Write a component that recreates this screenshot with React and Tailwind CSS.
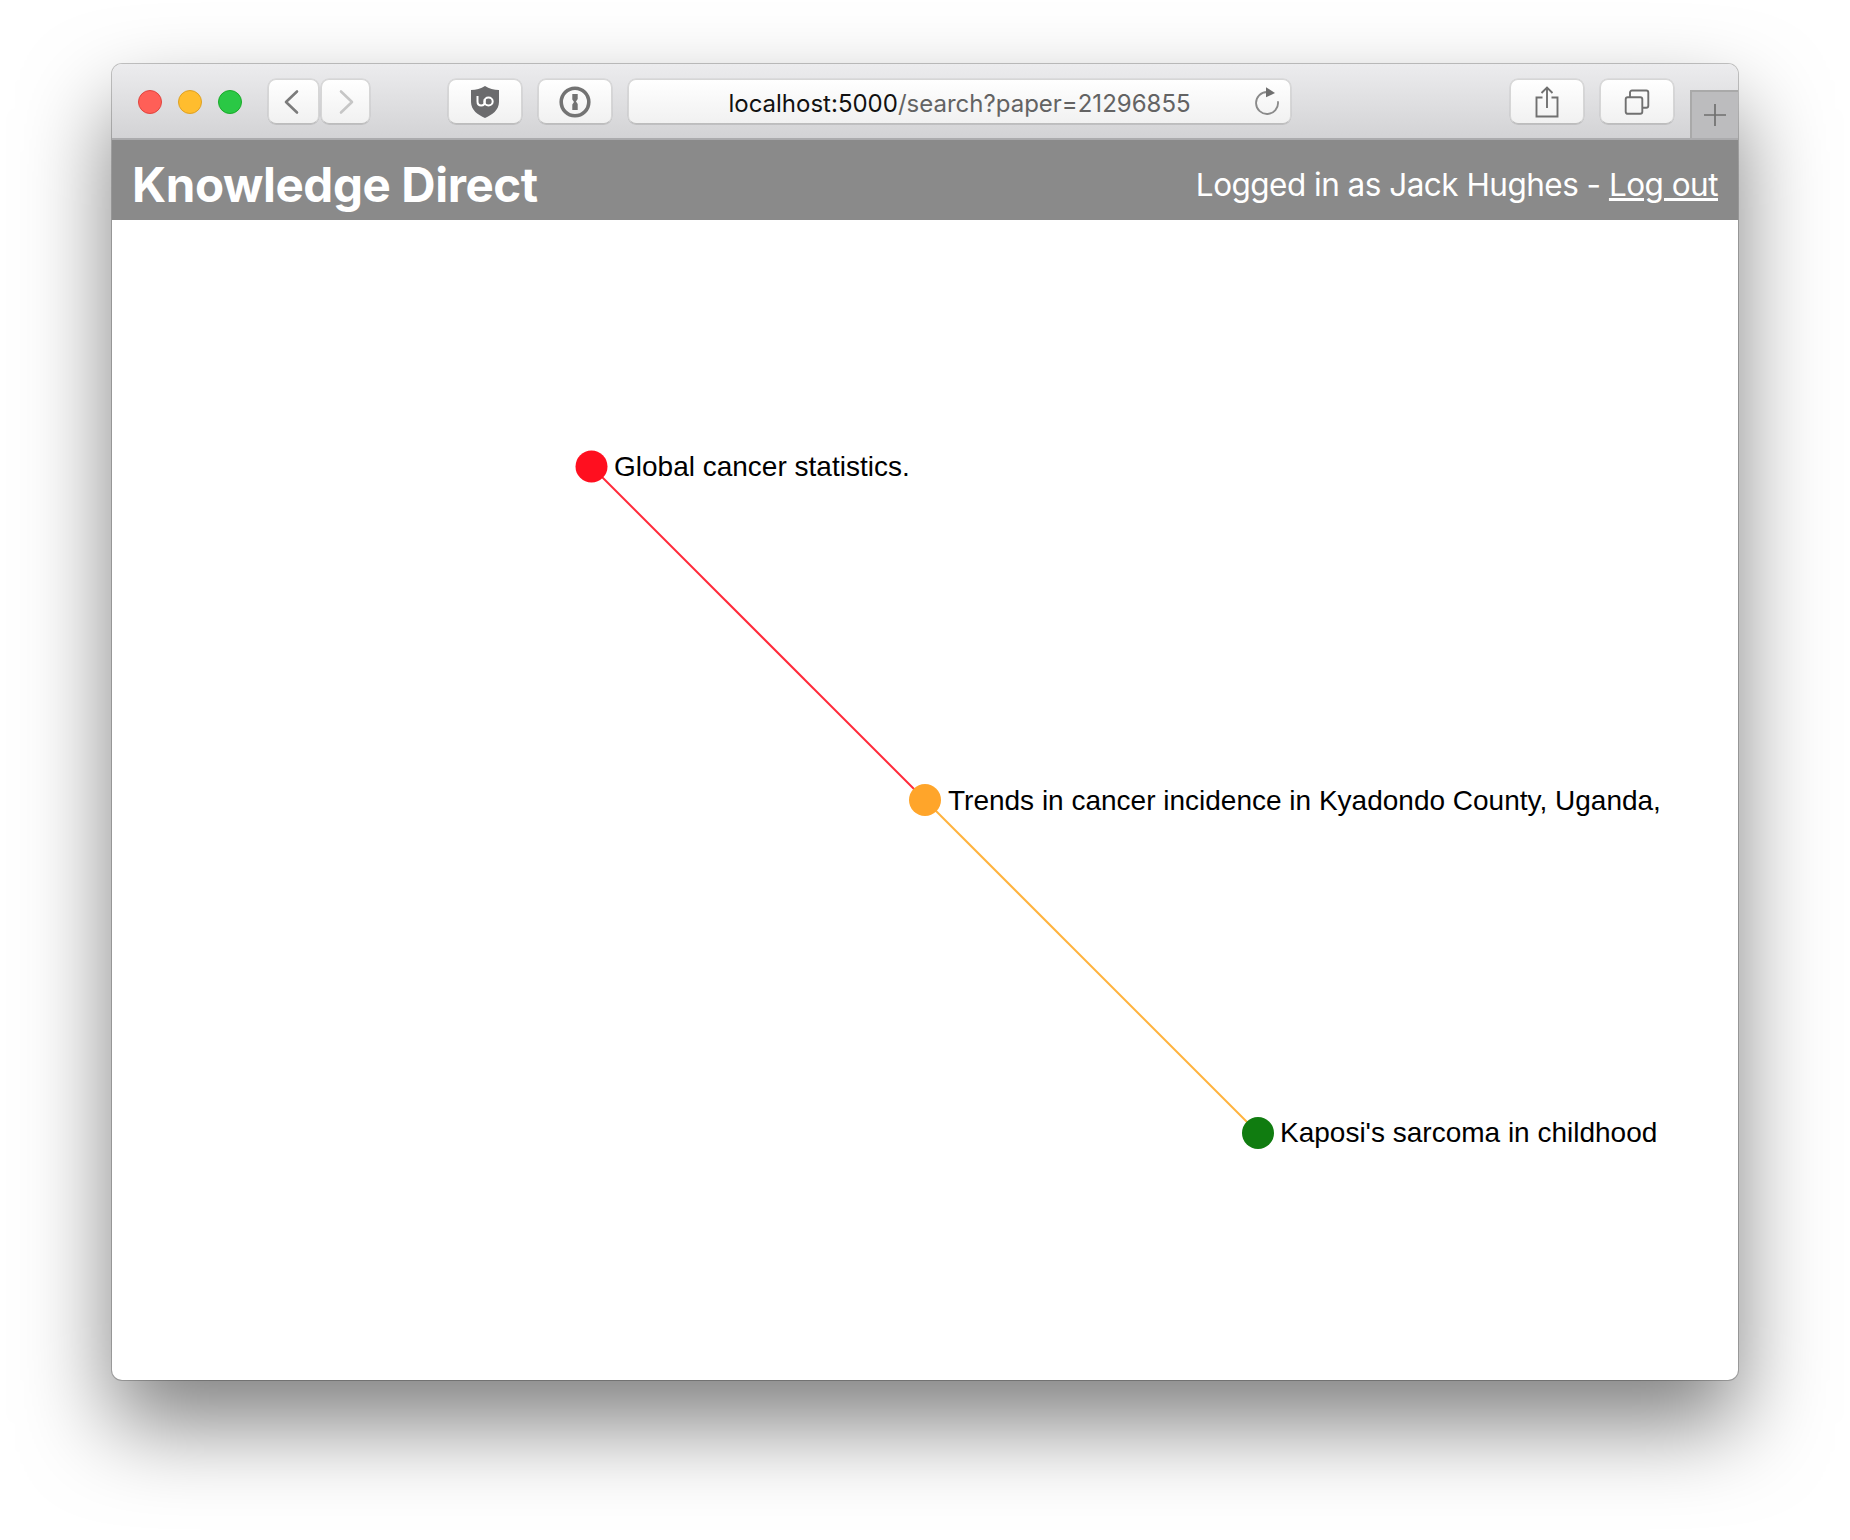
const Btn = ({ className, children }) => (
  <div className={"flex h-[45px] items-center justify-center rounded-[8px] border border-[#d6d6d6] border-b-[#bdbdbd] bg-gradient-to-b from-[#ffffff] to-[#f1f1f1] shadow-[0_0_0_0.5px_rgba(0,0,0,0.1),0_1px_0_rgba(0,0,0,0.06)] " + className}>
    {children}
  </div>
);

function Toolbar() {
  return (
    <div className="relative flex h-[76px] shrink-0 items-start border-b-2 border-[#ababad] bg-gradient-to-b from-[#ececee] to-[#d3d3d5] pt-[15px]">
      <div className="ml-[26px] mt-[11px] flex gap-[16px]">
        <span className="h-[24px] w-[24px] rounded-full border border-[#e0443e] bg-[#ff5f57]" />
        <span className="h-[24px] w-[24px] rounded-full border border-[#dea123] bg-[#ffbd2e]" />
        <span className="h-[24px] w-[24px] rounded-full border border-[#1aab29] bg-[#2ac845]" />
      </div>
      <div className="ml-[26px] flex gap-[2px]">
        <Btn className="w-[51px]">
          <svg className="mr-[5px]" width="16" height="26" viewBox="0 0 16 26" fill="none" stroke="#7b7b7b" strokeWidth="2.6" strokeLinecap="round" strokeLinejoin="round">
            <path d="M14 2.5 L3 13 L14 23.5" />
          </svg>
        </Btn>
        <Btn className="w-[49px]">
          <svg className="ml-[3px]" width="16" height="26" viewBox="0 0 16 26" fill="none" stroke="#c6c6c6" strokeWidth="2.6" strokeLinecap="round" strokeLinejoin="round">
            <path d="M2 2.5 L13 13 L2 23.5" />
          </svg>
        </Btn>
      </div>
      <Btn className="ml-[78px] w-[74px]">
        <svg width="30" height="34" viewBox="0 0 30 34">
          <path d="M15 1 C19 3.8 24 5 29 5 L29 17 C29 25 22 30 15 33 C8 30 1 25 1 17 L1 5 C6 5 11 3.8 15 1 Z" fill="#6b6b6d" />
          <path d="M7.5 11 L7.5 16.5 C7.5 19 9 20.5 11.2 20.5 C13.4 20.5 14.8 19 14.8 16.5 L14.8 14" fill="none" stroke="#fff" strokeWidth="2" />
          <ellipse cx="18.5" cy="16.5" rx="4.2" ry="4" fill="none" stroke="#fff" strokeWidth="2" />
        </svg>
      </Btn>
      <Btn className="ml-[16px] w-[74px]">
        <svg width="32" height="32" viewBox="0 0 32 32">
          <circle cx="16" cy="16" r="13.8" fill="none" stroke="#737373" strokeWidth="3.6" />
          <path d="M13.3 8 L18.7 8 L18.7 13 L17 15.5 L18.7 18 L18.7 24 L13.3 24 L13.3 18.5 L15 16 L13.3 13.5 Z" fill="#737373" />
        </svg>
      </Btn>
      <Btn className="ml-[16px] w-[663px] relative">
        <span className="translate-y-[2px] font-['Inter',sans-serif] text-[24px] leading-none text-[#636363]">
          <span className="text-[#111111]">localhost:5000</span>/search?paper=21296855
        </span>
        <svg className="absolute right-[10px] top-[6px]" width="26" height="32" viewBox="0 0 26 32" fill="none">
          <path d="M13 6 A11 11 0 1 0 24 16" stroke="#8a8a8a" strokeWidth="1.8" strokeLinecap="round" />
          <path d="M12 1.3 L21 7 L12 11.3 Z" fill="#6f6f6f" />
        </svg>
      </Btn>
      <Btn className="ml-[219px] w-[74px]">
        <svg width="24" height="34" viewBox="0 0 24 34" fill="none" stroke="#707070" strokeWidth="1.9">
          <path d="M7.5 12.5 H1.5 V31.5 H22.5 V12.5 H16.5" />
          <path d="M12 23 V2.5 M6.5 8 L12 2.5 L17.5 8" />
        </svg>
      </Btn>
      <Btn className="ml-[16px] w-[74px]">
        <svg width="26" height="26" viewBox="0 0 26 26" fill="none" stroke="#707070" strokeWidth="1.9">
          <rect x="1.7" y="8.2" width="16.6" height="16.6" rx="2" />
          <path d="M6 8.2 V3.5 A2 2 0 0 1 8 1.5 H22.3 A2 2 0 0 1 24.3 3.5 V16.8 A2 2 0 0 1 22.3 18.8 H18.3" />
        </svg>
      </Btn>
      <div className="absolute bottom-0 right-0 flex h-[48px] w-[48px] items-center justify-center border-l-2 border-t-2 border-[#a9a9a9] bg-[#bcbcbe]">
        <svg width="24" height="24" viewBox="0 0 24 24" stroke="#6f6f6f" strokeWidth="1.7">
          <path d="M12 1 V23 M1 12 H23" />
        </svg>
      </div>
    </div>
  );
}

function Graph() {
  const label = "font-['Liberation_Sans',Arial,sans-serif]";
  return (
    <svg width="1626" height="1160" viewBox="112 220 1626 1160" className="block">
      <line x1="591.5" y1="466.5" x2="925" y2="800" stroke="#ff2a3a" strokeWidth="2" />
      <line x1="925" y1="800" x2="1258" y2="1133" stroke="#ffb33e" strokeWidth="2" />
      <circle cx="591.5" cy="466.5" r="16" fill="#ff0f1f" />
      <circle cx="925" cy="800" r="16" fill="#ffa52a" />
      <circle cx="1258" cy="1133" r="16" fill="#107c10" />
      <g className={label} fontSize="28" fill="#000">
        <text x="614" y="476">Global cancer statistics.</text>
        <text x="948" y="810">Trends in cancer incidence in Kyadondo County, Uganda,</text>
        <text x="1280" y="1142">Kaposi's sarcoma in childhood</text>
      </g>
    </svg>
  );
}

export default function App() {
  return (
    <div className="h-[1540px] w-[1850px] overflow-hidden bg-white pl-[112px] pt-[64px]">
      <div className="flex h-[1316px] w-[1626px] flex-col overflow-hidden rounded-[10px] bg-white shadow-[0_0_0_1px_rgba(0,0,0,0.22),0_44px_88px_rgba(0,0,0,0.5)]">
        <Toolbar />
        <header className="flex h-[80px] shrink-0 items-center justify-between bg-[#8a8a8a] px-[20px] pt-[9px] font-['Inter',sans-serif] text-white">
          <h1 className="text-[47.5px] font-bold leading-none tracking-[-0.4px]">Knowledge Direct</h1>
          <p className="text-[31.5px] font-normal leading-none tracking-[-0.52px]">
            Logged in as Jack Hughes - <a className="underline">Log out</a>
          </p>
        </header>
        <Graph />
      </div>
    </div>
  );
}
